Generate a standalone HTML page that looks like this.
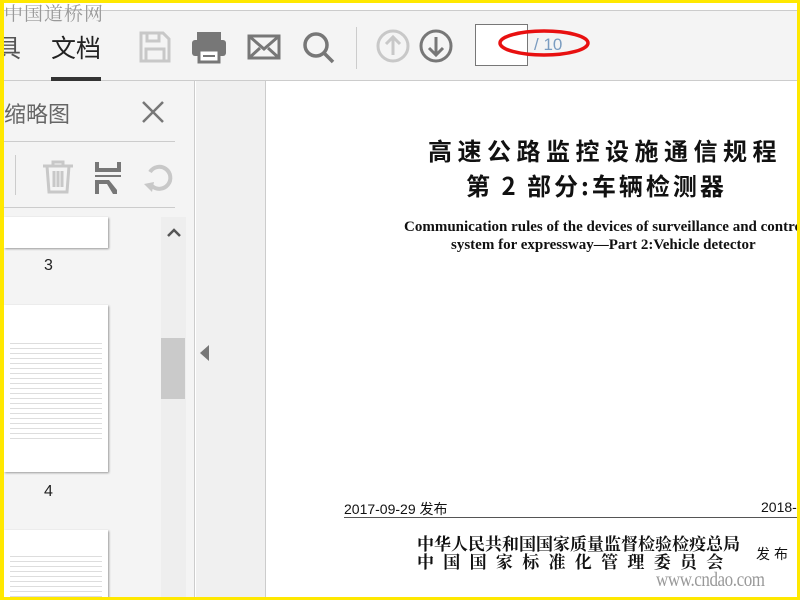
<!DOCTYPE html><html><head><meta charset="utf-8"><style>
*{margin:0;padding:0;box-sizing:border-box}
body{width:800px;height:600px;overflow:hidden;background:#ffe800;position:relative;font-family:"Liberation Sans","Noto Sans CJK SC",sans-serif}
.a{position:absolute}
.ser{font-family:"Liberation Serif","Noto Serif CJK SC",serif}
</style></head><body>
<div class="a" style="left:4px;top:3px;width:793px;height:594px;background:#fff;overflow:hidden">
 <div class="a" style="left:0;top:7px;width:793px;height:71px;background:#f4f4f4;border-top:1px solid #ccc;border-bottom:1px solid #ccc"></div>
 <div class="a" style="left:0;top:-4px;font-size:19px;color:#999;font-family:'Noto Serif CJK SC',serif;letter-spacing:1px">中国道桥网</div>
 <div class="a" style="left:-8px;top:26px;font-size:25px;color:#555">具</div>
 <div class="a" style="left:47px;top:26px;font-size:25px;color:#222">文档</div>
 <div class="a" style="left:47px;top:74px;width:50px;height:4px;background:#333"></div>
 <svg class="a" style="left:134px;top:27px" width="34" height="34" viewBox="0 0 34 34" fill="none" stroke="#c8c8c8" stroke-width="3"><path d="M3 3h22l6 6v22H3z M9 3v8h12V3 M8 31V19h18v12"/></svg>
 <svg class="a" style="left:187px;top:27px" width="36" height="34" viewBox="0 0 36 34"><rect x="6" y="2" width="24" height="8" fill="#777"/><rect x="1" y="10" width="34" height="16" rx="3" fill="#777"/><rect x="8" y="20" width="20" height="12" fill="#fff" stroke="#777" stroke-width="3"/><rect x="12" y="25" width="12" height="2" fill="#777"/></svg>
 <svg class="a" style="left:243px;top:31px" width="34" height="26" viewBox="0 0 34 26" fill="none" stroke="#777" stroke-width="3"><rect x="2" y="2" width="30" height="22"/><path d="M2 2l15 13 15-13M2 24l11-10M32 24 21 14"/></svg>
 <svg class="a" style="left:298px;top:28px" width="34" height="34" viewBox="0 0 34 34" fill="none" stroke="#777" stroke-width="3.5"><circle cx="14" cy="14" r="11"/><path d="M22 22l9 9"/></svg>
 <div class="a" style="left:352px;top:24px;width:1px;height:42px;background:#ccc"></div>
 <svg class="a" style="left:372px;top:26px" width="34" height="34" viewBox="0 0 34 34" fill="none" stroke="#c8c8c8" stroke-width="3"><circle cx="17" cy="17" r="15"/><path d="M17 26V9M10 15l7-7 7 7"/></svg>
 <svg class="a" style="left:415px;top:26px" width="34" height="34" viewBox="0 0 34 34" fill="none" stroke="#777" stroke-width="3"><circle cx="17" cy="17" r="15"/><path d="M17 8v17M10 19l7 7 7-7"/></svg>
 <div class="a" style="left:471px;top:21px;width:53px;height:42px;background:#fff;border:1px solid #777"></div>
 <div class="a" style="left:530px;top:32px;font-size:17px;color:#7a9cc0">/ 10</div>
 <svg class="a" style="left:490px;top:20px" width="100" height="40"><ellipse cx="50" cy="20" rx="44" ry="12" fill="none" stroke="#e81010" stroke-width="3.5"/></svg>
 <div class="a" style="left:0;top:78px;width:191px;height:516px;background:#f4f4f4;border-right:1px solid #ccc"></div>
 <div class="a" style="left:0;top:94px;font-size:22px;color:#666">缩略图</div>
 <svg class="a" style="left:137px;top:97px" width="24" height="24" stroke="#777" stroke-width="2.5"><path d="M2 2l20 20M22 2 2 22"/></svg>
 <div class="a" style="left:0;top:138px;width:171px;height:1px;background:#ccc"></div>
 <div class="a" style="left:11px;top:152px;width:1px;height:40px;background:#ccc"></div>
 <svg class="a" style="left:37px;top:157px" width="34" height="34" viewBox="0 0 34 34" fill="none" stroke="#c8c8c8" stroke-width="3"><path d="M2 6h30M12 6V2h10v4M6 6l2 26h18l2-26M13 11v16M17 11v16M21 11v16"/></svg>
 <svg class="a" style="left:88px;top:157px" width="34" height="34" viewBox="0 0 34 34" fill="#777"><rect x="3" y="2" width="4" height="8"/><rect x="3" y="8" width="26" height="4"/><rect x="25" y="2" width="4" height="8"/><rect x="3" y="15" width="26" height="2"/><path d="M3 20h14l8 10v4H21l-6-10H7v10H3z"/></svg>
 <svg class="a" style="left:138px;top:157px" width="34" height="34" viewBox="0 0 34 34" fill="none" stroke="#c8c8c8" stroke-width="4"><path d="M10 26A11 11 0 1 0 8 12"/><path d="M2 24l8 8 2-10z" fill="#c8c8c8" stroke="none"/></svg>
 <div class="a" style="left:0;top:204px;width:171px;height:1px;background:#ccc"></div>
 <div class="a" style="left:157px;top:214px;width:25px;height:380px;background:#eee"></div>
 <div class="a" style="left:157px;top:335px;width:24px;height:61px;background:#cacaca"></div>
 <svg class="a" style="left:163px;top:224px" width="14" height="10" fill="none" stroke="#555" stroke-width="2.5"><path d="M1 9l6-6 6 6"/></svg>
 <div class="a" style="left:0;top:214px;width:104px;height:31px;background:#fff;box-shadow:1px 1px 2px #999"></div>
 <div class="a" style="left:40px;top:254px;font-size:16px;color:#222">3</div>
 <div class="a" style="left:0;top:302px;width:104px;height:167px;background:#fff;box-shadow:1px 1px 2px #999">
  <div style="margin:34px 6px 0;height:100px;background:repeating-linear-gradient(#fff 0 4px,#ddd 4px 5px)"></div></div>
 <div class="a" style="left:40px;top:480px;font-size:16px;color:#222">4</div>
 <div class="a" style="left:0;top:527px;width:104px;height:70px;background:#fff;box-shadow:1px 1px 2px #999">
  <div style="margin:22px 6px 0;height:45px;background:repeating-linear-gradient(#fff 0 4px,#ddd 4px 5px)"></div></div>
 <div class="a" style="left:192px;top:78px;width:70px;height:516px;background:#f0f0f0;border-right:1px solid #ccc"></div>
 <svg class="a" style="left:196px;top:342px" width="10" height="16"><path d="M9 0v16L0 8z" fill="#777"/></svg>
 <div class="a" style="left:424px;top:129px;font-size:24px;font-weight:bold;color:#111;letter-spacing:5.5px;white-space:nowrap;font-family:'Noto Sans CJK SC',sans-serif">高速公路监控设施通信规程</div>
 <div class="a" style="left:462px;top:164px;font-size:24px;font-weight:bold;color:#111;letter-spacing:3px;white-space:nowrap;font-family:'Noto Sans CJK SC',sans-serif">第 2 部分:车辆检测器</div>
 <div class="a ser" style="left:400px;top:216px;font-size:15px;font-weight:bold;color:#111;white-space:nowrap">Communication rules of the devices of surveillance and control</div>
 <div class="a ser" style="left:447px;top:234px;font-size:15px;font-weight:bold;color:#111;white-space:nowrap">system for expressway—Part 2:Vehicle detector</div>
 <div class="a" style="left:340px;top:496px;font-size:14px;color:#111">2017-09-29 发布</div>
 <div class="a" style="left:757px;top:496px;font-size:14px;color:#111">2018-</div>
 <div class="a" style="left:340px;top:514px;width:453px;height:1px;background:#555"></div>
 <div class="a ser" style="left:413px;top:533px;font-size:17px;font-weight:bold;color:#111;white-space:nowrap;line-height:18px">中华人民共和国国家质量监督检验检疫总局<br><span style="letter-spacing:9.3px">中国国家标准化管理委员会</span></div>
 <div class="a" style="left:752px;top:541px;font-size:14px;color:#111;letter-spacing:4px">发布</div>
 <div class="a ser" style="left:652px;top:566px;font-size:20px;color:#999;letter-spacing:-0.5px;transform:scaleX(.85);transform-origin:left">www.cndao.com</div>
</div>
</body></html>
